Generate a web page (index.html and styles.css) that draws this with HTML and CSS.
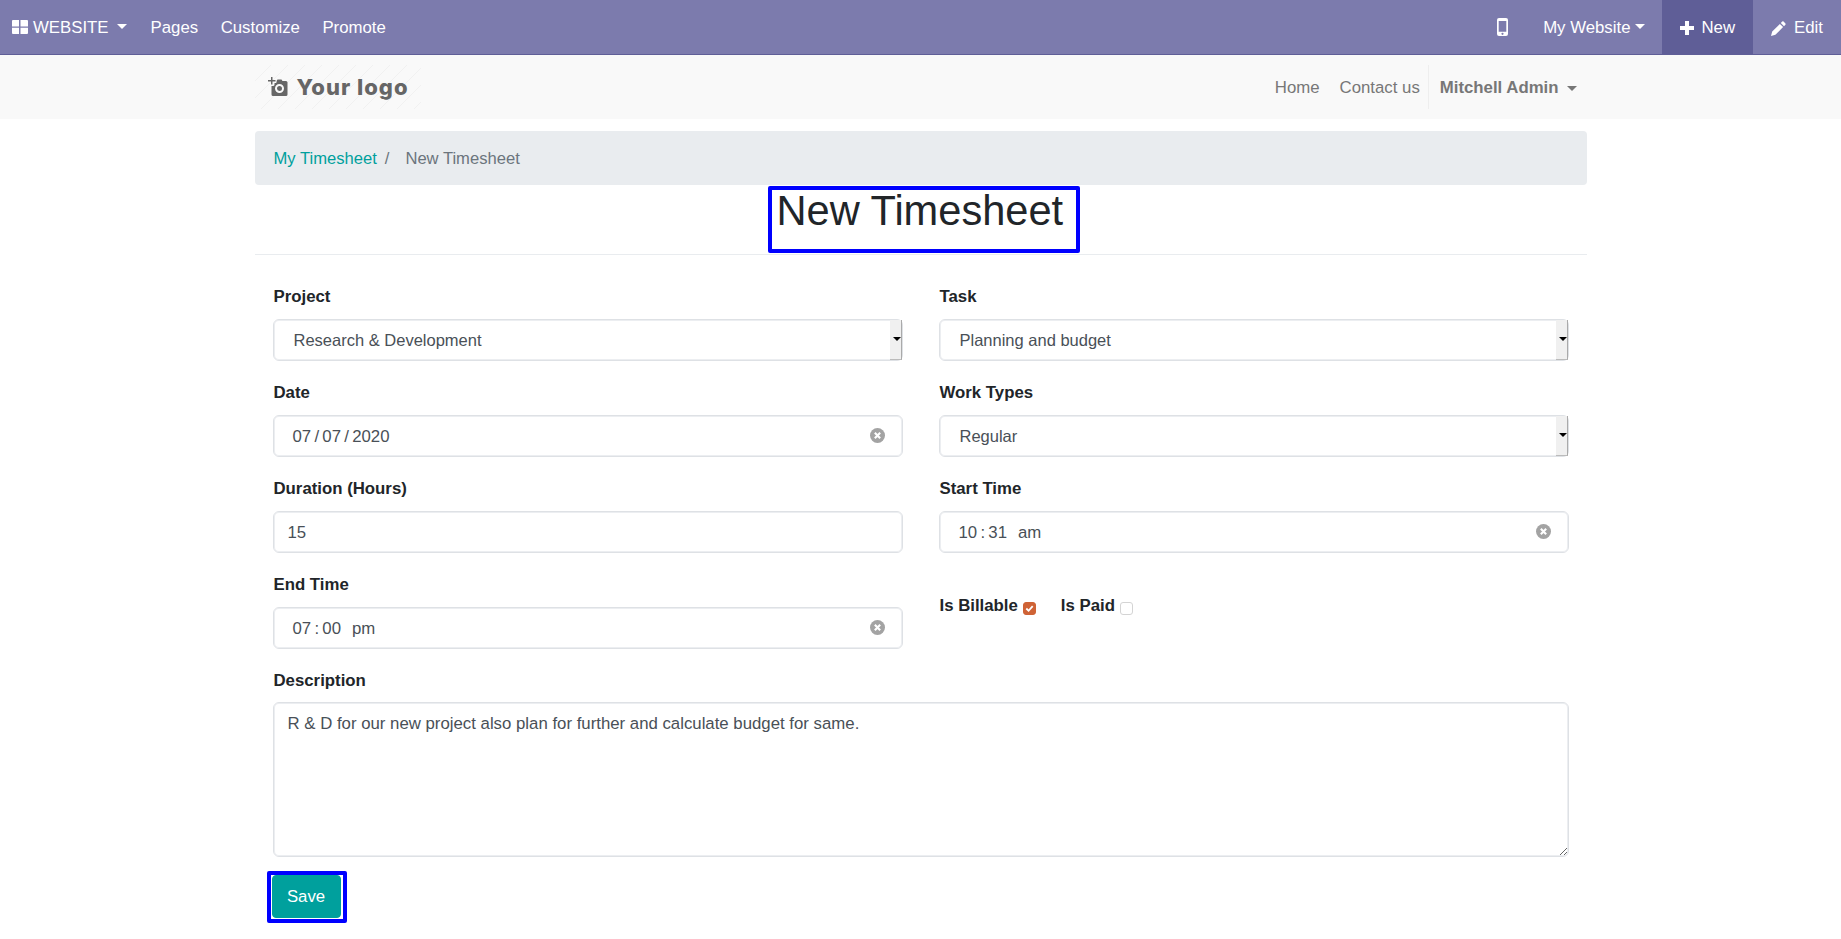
FILE: index.html
```html
<!DOCTYPE html>
<html lang="en">
<head>
  <meta charset="UTF-8" />
  <title>New Timesheet</title>
  <link rel="stylesheet" href="styles.css">
</head>
<body>
  <nav class="topbar">
    <div class="topbar-left">
      <a class="topbar-link brand">
        <svg class="icon-th" viewBox="0 0 16 14"><path d="M0 1q0-1 1-1h6v6.500H0zM8.500 0h6.500q1 0 1 1v5.500H8.500zM0 7.800h7V14H1q-1 0-1-1zM8.500 7.800H16V13q0 1-1 1H8.500z"/></svg>
        <span>WEBSITE</span><span class="caret caret-gap"></span>
      </a>
      <a class="topbar-link">Pages</a>
      <a class="topbar-link">Customize</a>
      <a class="topbar-link">Promote</a>
    </div>
    <div class="topbar-right">
      <a class="topbar-link mobile">
        <svg class="icon-mobile" viewBox="0 0 11 18"><path fill-rule="evenodd" d="M2 0h7q2 0 2 2v14q0 2-2 2H2q-2 0-2-2V2q0-2 2-2zM1.700 3v10.800h7.600V3zM5.500 14.700a1.100 1.100 0 1 0 0 2.200 1.100 1.100 0 0 0 0-2.200z"/></svg>
      </a>
      <a class="topbar-link site">My Website<span class="caret"></span></a>
      <a class="topbar-link new">
        <svg class="icon-plus" viewBox="0 0 14 14"><path d="M5 0h4v5h5v4H9v5H5V9H0V5h5z"/></svg>
        New
      </a>
      <a class="topbar-link edit">
        <svg class="icon-pencil" viewBox="0 0 15 15"><path d="M11.200.6q.7-.6 1.400 0l1.800 1.800q.6.700 0 1.400L13 5.200 9.800 2zM8.900 2.900l3.200 3.200-7.700 7.700L0 15l1.200-4.400z"/></svg>
        Edit
      </a>
    </div>
  </nav>

  <header class="site-header">
    <div class="container header-inner">
      <a class="logo">
        <svg class="icon-camera" viewBox="0 0 20 20"><path fill-rule="evenodd" d="M3 0h1.500v3H7.500v1.500H4.500v3H3v-3H0V3h3zM8.500 4l1-1.500h4l1 1.500H18q1.500 0 1.500 1.500v12q0 1.500-1.500 1.500H5q-1.500 0-1.500-1.500V9h1.500a1.500 1.500 0 0 0 1.500-1.500V6H8a1.500 1.500 0 0 0 .5-2zM11.500 7a4.500 4.500 0 1 0 0 9 4.500 4.500 0 0 0 0-9zM11.500 9a2.500 2.500 0 1 1 0 5 2.500 2.500 0 0 1 0-5z"/></svg>
        <span>Your logo</span>
      </a>
      <div class="header-menu">
        <a class="menu-link">Home</a>
        <a class="menu-link">Contact us</a>
        <a class="menu-user">Mitchell Admin <span class="caret caret-gap"></span></a>
      </div>
    </div>
  </header>

  <main class="container">
    <ol class="breadcrumb">
      <li><a class="crumb-link">My Timesheet</a></li>
      <li class="crumb-sep">/</li>
      <li class="crumb-active">New Timesheet</li>
    </ol>

    <div class="title-row">
      <h1 class="page-title">New Timesheet</h1>
    </div>

    <form class="timesheet-form">
      <div class="field">
        <label for="project">Project</label>
        <div class="select-wrap">
          <select id="project"><option>Research &amp; Development</option></select>
        </div>
      </div>
      <div class="field">
        <label for="task">Task</label>
        <div class="select-wrap">
          <select id="task"><option>Planning and budget</option></select>
        </div>
      </div>

      <div class="field">
        <label>Date</label>
        <div class="control segmented">
          <span>07</span><span class="seg-sep">/</span><span>07</span><span class="seg-sep">/</span><span>2020</span>
          <span class="clear-btn">
            <svg viewBox="0 0 14 14"><circle cx="7" cy="7" r="7"/><path d="M4.500 4.500l5 5M9.500 4.500l-5 5"/></svg>
          </span>
        </div>
      </div>
      <div class="field">
        <label for="worktype">Work Types</label>
        <div class="select-wrap">
          <select id="worktype"><option>Regular</option></select>
        </div>
      </div>

      <div class="field">
        <label for="duration">Duration (Hours)</label>
        <input class="control" id="duration" type="text" value="15" />
      </div>
      <div class="field">
        <label>Start Time</label>
        <div class="control segmented">
          <span>10</span><span class="seg-sep">:</span><span>31</span><span class="seg-ampm">am</span>
          <span class="clear-btn">
            <svg viewBox="0 0 14 14"><circle cx="7" cy="7" r="7"/><path d="M4.500 4.500l5 5M9.500 4.500l-5 5"/></svg>
          </span>
        </div>
      </div>

      <div class="field">
        <label>End Time</label>
        <div class="control segmented">
          <span>07</span><span class="seg-sep">:</span><span>00</span><span class="seg-ampm">pm</span>
          <span class="clear-btn">
            <svg viewBox="0 0 14 14"><circle cx="7" cy="7" r="7"/><path d="M4.500 4.500l5 5M9.500 4.500l-5 5"/></svg>
          </span>
        </div>
      </div>
      <div class="field checks">
        <span class="check-item">
          <span class="check-label">Is Billable</span>
          <span class="checkbox checked">
            <svg viewBox="0 0 12 12"><path d="M2.500 6l2.500 2.500 4.500-5"/></svg>
          </span>
        </span>
        <span class="check-item">
          <span class="check-label">Is Paid</span>
          <span class="checkbox"></span>
        </span>
      </div>

      <div class="field field-wide">
        <label for="description">Description</label>
        <textarea id="description">R &amp; D for our new project also plan for further and calculate budget for same.</textarea>
      </div>

      <div class="field-wide save-row">
        <div class="save-outline">
          <button class="save-btn" type="button">Save</button>
        </div>
      </div>
    </form>
  </main>
</body>
</html>
```

FILE: styles.css
```css
* { box-sizing: border-box; }
body { margin: 0; font-family: "Liberation Sans", Arial, sans-serif; font-size: 16.8px; color: #212529; background: #fff; }
a { text-decoration: none; }

.caret { display: inline-block; width: 0; height: 0; border-top: 5px solid currentColor; border-left: 5px solid transparent; border-right: 5px solid transparent; }
.caret-gap { margin-left: 4px; }

.topbar { display: flex; justify-content: space-between; height: 55px; background: #7c7bad; border-bottom: 1px solid #5f5e97; color: #fff; }
.topbar-left, .topbar-right { display: flex; }
.topbar-link { display: flex; align-items: center; gap: 6px; padding: 2px 11.250px 0; color: #fff; white-space: nowrap; }
.topbar-link .caret { margin-top: -3px; }
.brand { padding-left: 12px; padding-right: 12.750px; gap: 5px; }
.brand .caret-gap { margin-left: 3px; }
.icon-th { width: 16px; height: 14px; fill: #fff; margin-top: -2px; }
.mobile { padding: 0 15px; margin-right: 5px; }
.icon-mobile { width: 11px; height: 18px; fill: #fff; }
.site { gap: 0; padding: 2px 17px 0 15px; }
.site .caret { margin-left: 4px; }
.new { background: #5f5e97; padding: 2px 18px 0; gap: 8px; }
.icon-plus { width: 14px; height: 14px; fill: #fff; }
.edit { padding: 2px 18px 0; gap: 8px; }
.icon-pencil { width: 15px; height: 15px; fill: #fff; }

.container { width: 1332px; margin: 0 auto; }
.site-header { height: 64px; background: #f9f9f9; }
.header-inner { display: flex; justify-content: space-between; align-items: center; height: 64px; }
.logo { display: flex; align-items: center; gap: 9px; width: 166px; height: 44px; padding-left: 13px; color: #666; background: repeating-linear-gradient(135deg, #f9f9f9 0 11px, #f1f1f1 11px 12px); }
.icon-camera { width: 20px; height: 20px; fill: #666; }
.logo span { font-family: Inter, sans-serif; font-weight: 800; font-size: 22px; letter-spacing: 1px; }
.header-menu { display: flex; align-items: center; height: 44px; color: #777; }
.menu-link { color: #777; padding: 2px 8px 0 12px; }
.menu-user { display: flex; align-items: center; gap: 4px; height: 44px; padding: 2px 10px 0 11px; border-left: 1px solid #eee; color: #777; font-weight: 700; }

.breadcrumb { display: flex; list-style: none; margin: 12px 0 0; padding: 1px 19px 0; height: 54px; align-items: center; background: #e9ecef; border-radius: 4px; font-size: 16.600px; }
.crumb-link { color: #00a09d; }
.crumb-sep { color: #6c757d; padding: 0 16px 0 8px; }
.crumb-active { color: #6c757d; }

.title-row { display: flex; justify-content: center; height: 70px; padding-top: 1px; border-bottom: 1px solid #e9ecef; }
.page-title { width: 312px; height: 67px; margin: 0 0 0 6px; padding-left: 5px; border: 4px solid #00f; border-radius: 2px; font-size: 41.600px; font-weight: 400; line-height: 41px; white-space: nowrap; }

.timesheet-form { display: grid; grid-template-columns: 630px 630px; column-gap: 36px; padding: 30px 18px 0; }
.field { height: 96px; }
.field label, .check-label { display: block; font-weight: 700; line-height: 24px; color: #212529; }
.field label { margin-bottom: 10px; padding-left: 1px; }

.control, .select-wrap select, textarea { width: 100%; height: 42px; border: 1px solid #dee1e5; border-radius: 6px; box-shadow: inset 0 0 0 1px #eceef1; background: #fff; color: #495057; font-family: inherit; font-size: 16.8px; }
input.control { padding: 1px 14px 0; outline: none; }
.select-wrap { position: relative; }
.select-wrap select { appearance: none; padding: 0 20px; display: block; font-size: 16.500px; }
.select-wrap::after { content: ""; position: absolute; top: 1px; right: 1px; width: 11px; height: 39px; background: #f0f0f0; border-right: 1px solid #aaa; border-bottom: 1px solid #bbb; }
.select-wrap::before { content: ""; position: absolute; z-index: 1; top: 18px; right: 2px; border-top: 4px solid #000; border-left: 4px solid transparent; border-right: 4px solid transparent; }
.segmented { display: flex; align-items: center; padding: 1px 18px 0 19px; }
.seg-sep { margin: 0 3.250px; }
.seg-ampm { margin-left: 11px; }
.clear-btn { display: flex; margin-left: auto; margin-right: -1px; margin-top: -2px; }
.clear-btn svg { width: 15px; height: 15px; }
.clear-btn circle { fill: #a3a3a3; }
.clear-btn path { stroke: #fff; stroke-width: 2; fill: none; }

.checks { display: flex; gap: 25px; padding-top: 21px; padding-left: 1px; }
.check-item { display: flex; align-items: flex-start; gap: 5px; }
.checkbox { width: 13px; height: 13px; margin-top: 8px; border: 1px solid #d4d4d4; border-radius: 3px; background: #fff; }
.checkbox.checked { display: flex; background: #cf6336; border-color: #cf6336; }
.checkbox svg { width: 11px; height: 11px; fill: none; stroke: #fff; stroke-width: 2; }

.field-wide { grid-column: 1 / 3; }
.field-wide.field { height: auto; }
.field-wide.field label { margin-bottom: 9px; }
textarea { display: block; height: 155px; padding: 8px 14px; line-height: 25px; outline: none; }

.save-outline { width: 80px; height: 52px; margin: 14px 0 0 -6px; border: 4px solid #00f; border-radius: 2px; }
.save-btn { display: block; width: 69px; height: 43px; margin-left: 1px; padding-top: 2px; border: 1px solid #00a09d; border-radius: 4px; background: #00a09d; color: #fff; font-family: inherit; font-size: 16.8px; }
```
